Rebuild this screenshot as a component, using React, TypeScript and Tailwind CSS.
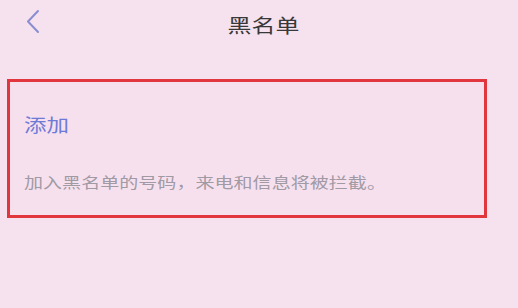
// Blacklist settings screen — header with back chevron, highlighted "add" card.
export default function App() {
  return (
    <div
      className="flex h-[308px] w-[518px] flex-col overflow-hidden bg-[#f5e2ee]"
      style={{ fontFamily: '"Noto Sans CJK SC", "Noto Sans", sans-serif' }}
    >
      <header className="relative flex h-[44px] items-center justify-center">
        <button type="button" className="absolute left-[26px] top-[9px] text-[#8b8dd0]" aria-label="返回">
          <svg width="14" height="25" viewBox="0 0 14 25" fill="none">
            <path d="M12 2 L2 12.5 L12 23" stroke="currentColor" strokeWidth="2" strokeLinecap="round" strokeLinejoin="round" />
          </svg>
        </button>
        <h1 className="ml-[10px] mt-[6px] origin-center scale-x-[1.26] text-[19px] text-[#383838]">黑名单</h1>
      </header>

      <section className="ml-[7px] mt-[35px] flex h-[139px] w-[480px] flex-col border-[3px] border-[#e2363f] bg-[#f7e0ee] pl-[14px]">
        <span className="mt-[30px] origin-left scale-x-[1.25] text-[18px] leading-[24px] text-[#6d7bd6]">添加</span>
        <p className="mt-[36px] origin-left scale-x-[1.27] text-[15px] leading-[20px] text-[#a09aa5]">
          加入黑名单的号码，来电和信息将被拦截。
        </p>
      </section>
    </div>
  );
}
